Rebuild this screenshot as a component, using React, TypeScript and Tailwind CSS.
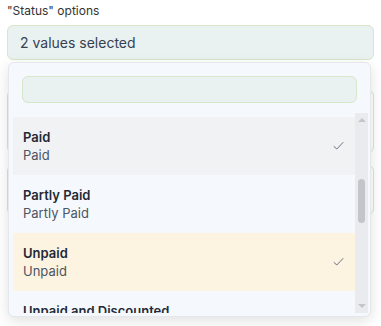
import React, { useLayoutEffect, useRef } from 'react';

const OPTIONS = [
  'Draft',
  'Return',
  'Credit Note Issued',
  'Submitted',
  'Paid',
  'Partly Paid',
  'Unpaid',
  'Unpaid and Discounted',
  'Partly Paid and Discounted',
  'Overdue and Discounted',
  'Overdue',
  'Cancelled',
  'Internal Transfer',
];

const SELECTED = ['Paid', 'Unpaid'];

function Check() {
  return (
    <svg width="11" height="10" viewBox="0 0 11 10" fill="none" stroke="#6b7280" strokeWidth="1" strokeLinecap="round" strokeLinejoin="round">
      <path d="M1 5.5 L3.8 8 L10 1.5" />
    </svg>
  );
}

export default function App() {
  const listRef = useRef<HTMLDivElement>(null);

  useLayoutEffect(() => {
    if (listRef.current) listRef.current.scrollTop = 232;
  }, []);

  return (
    <div className="relative h-[326px] w-[381px] overflow-hidden bg-white px-[7px] text-[#1f2937]" style={{ fontFamily: 'Inter, "Noto Sans", sans-serif' }}>
      <div className="pt-[3px] text-xs leading-4 text-[#333]">"Status" options</div>
      <div className="mt-[6px] flex h-[35px] items-center rounded-md border border-[#d8e6c9] bg-[#e9f1f1] px-3 text-sm text-[#374151]">
        2 values selected
      </div>

      {/* fields behind the menu */}
      <div className="mt-[30px] h-[63px] rounded-md border border-[#d8e6c9] bg-white" />
      <div className="mt-3 h-[50px] rounded-md border border-[#d8e6c9] bg-white" />

      <div className="absolute left-[8px] top-[62px] flex w-[363px] flex-col rounded-md border border-[#e4e7eb] bg-[#f5f9fd] shadow-[0_4px_14px_rgba(0,0,0,0.12)]">
        <div className="px-[13px] pt-[13px] pb-[10px]">
          <div className="h-[27px] rounded-md border border-[#d8e6c9] bg-[#e9f1f1]" />
        </div>
        <div className="mb-[3px] ml-[4px] mr-[2px] flex h-[200px]">
          <div ref={listRef} className="h-full flex-1 overflow-hidden">
            <div className="py-1">
              {OPTIONS.map((o) => {
                const sel = SELECTED.includes(o);
                const bg = o === 'Paid' ? 'bg-[#f1f2f4]' : o === 'Unpaid' ? 'bg-[#fdf3e1]' : '';
                return (
                  <div key={o} className={`flex items-center justify-between px-[10px] py-[11px] text-[13px] leading-[18px] ${bg}`}>
                    <div>
                      <div className="font-semibold text-[#1f2937]">{o}</div>
                      <div className="text-[#4b5563]">{o}</div>
                    </div>
                    {sel && (
                      <span className="mr-px">
                        <Check />
                      </span>
                    )}
                  </div>
                );
              })}
            </div>
          </div>
          {/* scrollbar */}
          <div className="flex w-[13px] flex-col items-center bg-[#e9ebee]">
            <div className="mt-[5px] h-0 w-0 border-x-[4px] border-b-[4px] border-x-transparent border-b-[#c2c5ca]" />
            <div className="mt-[57px] h-[44px] w-[7px] rounded-full bg-[#c2c5ca]" />
            <div className="mt-auto mb-[5px] h-0 w-0 border-x-[4px] border-t-[4px] border-x-transparent border-t-[#c2c5ca]" />
          </div>
        </div>
      </div>
    </div>
  );
}
